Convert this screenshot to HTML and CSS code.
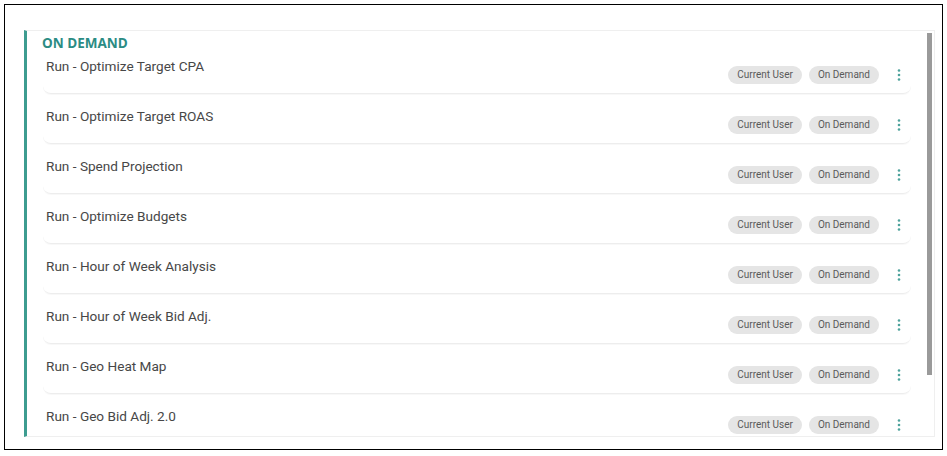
FILE: index.html
```html
<!DOCTYPE html>
<html lang="en">
<head>
  <meta charset="UTF-8">
  <meta name="viewport" content="width=device-width, initial-scale=1.0">
  <title>On Demand Tasks</title>
  <link rel="stylesheet" href="styles.css">
</head>
<body>
  <div class="task-frame">
    <div class="task-panel">
      <div class="task-panel__title">On Demand</div>
      <div class="task-list">
        <div class="task-row">
          <div class="task-row__name">Run - Optimize Target CPA</div>
          <div class="task-row__actions">
            <span class="task-chip">Current User</span>
            <span class="task-chip">On Demand</span>
            <span class="task-menu"><svg width="4" height="12" viewBox="0 0 4 12"><circle cx="2" cy="1.5" r="1.3"/><circle cx="2" cy="6" r="1.3"/><circle cx="2" cy="10.5" r="1.3"/></svg></span>
          </div>
        </div>
        <div class="task-row">
          <div class="task-row__name">Run - Optimize Target ROAS</div>
          <div class="task-row__actions">
            <span class="task-chip">Current User</span>
            <span class="task-chip">On Demand</span>
            <span class="task-menu"><svg width="4" height="12" viewBox="0 0 4 12"><circle cx="2" cy="1.5" r="1.3"/><circle cx="2" cy="6" r="1.3"/><circle cx="2" cy="10.5" r="1.3"/></svg></span>
          </div>
        </div>
        <div class="task-row">
          <div class="task-row__name">Run - Spend Projection</div>
          <div class="task-row__actions">
            <span class="task-chip">Current User</span>
            <span class="task-chip">On Demand</span>
            <span class="task-menu"><svg width="4" height="12" viewBox="0 0 4 12"><circle cx="2" cy="1.5" r="1.3"/><circle cx="2" cy="6" r="1.3"/><circle cx="2" cy="10.5" r="1.3"/></svg></span>
          </div>
        </div>
        <div class="task-row">
          <div class="task-row__name">Run - Optimize Budgets</div>
          <div class="task-row__actions">
            <span class="task-chip">Current User</span>
            <span class="task-chip">On Demand</span>
            <span class="task-menu"><svg width="4" height="12" viewBox="0 0 4 12"><circle cx="2" cy="1.5" r="1.3"/><circle cx="2" cy="6" r="1.3"/><circle cx="2" cy="10.5" r="1.3"/></svg></span>
          </div>
        </div>
        <div class="task-row">
          <div class="task-row__name">Run - Hour of Week Analysis</div>
          <div class="task-row__actions">
            <span class="task-chip">Current User</span>
            <span class="task-chip">On Demand</span>
            <span class="task-menu"><svg width="4" height="12" viewBox="0 0 4 12"><circle cx="2" cy="1.5" r="1.3"/><circle cx="2" cy="6" r="1.3"/><circle cx="2" cy="10.5" r="1.3"/></svg></span>
          </div>
        </div>
        <div class="task-row">
          <div class="task-row__name">Run - Hour of Week Bid Adj.</div>
          <div class="task-row__actions">
            <span class="task-chip">Current User</span>
            <span class="task-chip">On Demand</span>
            <span class="task-menu"><svg width="4" height="12" viewBox="0 0 4 12"><circle cx="2" cy="1.5" r="1.3"/><circle cx="2" cy="6" r="1.3"/><circle cx="2" cy="10.5" r="1.3"/></svg></span>
          </div>
        </div>
        <div class="task-row">
          <div class="task-row__name">Run - Geo Heat Map</div>
          <div class="task-row__actions">
            <span class="task-chip">Current User</span>
            <span class="task-chip">On Demand</span>
            <span class="task-menu"><svg width="4" height="12" viewBox="0 0 4 12"><circle cx="2" cy="1.5" r="1.3"/><circle cx="2" cy="6" r="1.3"/><circle cx="2" cy="10.5" r="1.3"/></svg></span>
          </div>
        </div>
        <div class="task-row">
          <div class="task-row__name">Run - Geo Bid Adj. 2.0</div>
          <div class="task-row__actions">
            <span class="task-chip">Current User</span>
            <span class="task-chip">On Demand</span>
            <span class="task-menu"><svg width="4" height="12" viewBox="0 0 4 12"><circle cx="2" cy="1.5" r="1.3"/><circle cx="2" cy="6" r="1.3"/><circle cx="2" cy="10.5" r="1.3"/></svg></span>
          </div>
        </div>
      </div>
      <div class="task-panel__thumb"></div>
    </div>
  </div>
</body>
</html>
```

FILE: styles.css
```css
/* General styles */
body {
  margin: 0;
  background: #fff;
  font-family: Roboto, "Liberation Sans", sans-serif;
}

.task-frame {
  display: flex;
  flex-direction: column;
  box-sizing: border-box;
  width: 939px;
  height: 446px;
  margin: 4px;
  padding: 25px 7px 12px 19px;
  border: 1px solid #000;
}

.task-panel {
  position: relative;
  flex: 1;
  min-height: 0;
  overflow: hidden;
  background: #fff;
  border: 1px solid #efefef;
  border-left: 3px solid #3d9c90;
}

/* scroll thumb drawn over the list */
.task-panel__thumb {
  position: absolute;
  top: 2px;
  right: 2px;
  width: 5px;
  height: 342px;
  background: #9a9a9a;
}

.task-panel__title {
  padding: 3px 15px 0;
  line-height: 18px;
  font-family: "Open Sans", sans-serif;
  font-size: 13.5px;
  font-weight: 700;
  text-transform: uppercase;
  color: #2b8c84;
}

.task-list {
  padding: 0 23px 0 16px;
}

.task-row {
  display: flex;
  justify-content: space-between;
  align-items: flex-start;
  padding: 12px 0 9px 3px;
  border-bottom: 1px solid #ededed;
  border-radius: 0 0 8px 8px;
  box-shadow: 0 1px 1px rgba(0, 0, 0, .03);
}

.task-row:first-child {
  padding-top: 4px;
}

.task-row__name {
  line-height: 20px;
  font-size: 13.6px;
  color: #474747;
}

.task-row__actions {
  display: flex;
  align-items: center;
  gap: 7px;
  margin-top: 10px;
}

.task-chip {
  height: 18px;
  padding: 0 9px;
  border-radius: 9px;
  background: #e5e5e5;
  line-height: 18px;
  font-size: 10px;
  color: #5a5a5a;
}

.task-menu {
  display: flex;
  justify-content: center;
  align-items: center;
  width: 24px;
  height: 18px;
  margin-left: 1px;
  fill: #4ea39c;
}
```
